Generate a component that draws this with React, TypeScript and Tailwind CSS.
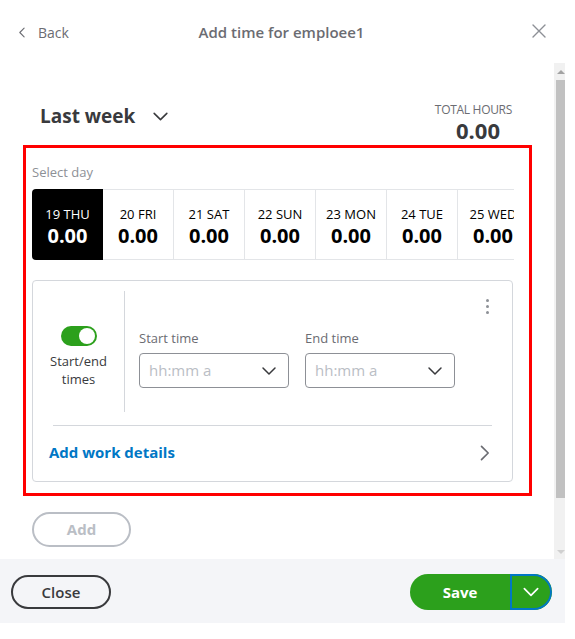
const days = [
  { label: "19 THU", value: "0.00" },
  { label: "20 FRI", value: "0.00" },
  { label: "21 SAT", value: "0.00" },
  { label: "22 SUN", value: "0.00" },
  { label: "23 MON", value: "0.00" },
  { label: "24 TUE", value: "0.00" },
  { label: "25 WED", value: "0.00" },
]

function Chevron({ className = "", dir = "down" }: { className?: string; dir?: "down" | "left" | "right" }) {
  const d = dir === "down" ? "M4 8l8 8 8-8" : dir === "left" ? "M15 4l-8 8 8 8" : "M9 4l8 8-8 8"
  return (
    <svg viewBox="0 0 24 24" className={className} fill="none" stroke="currentColor" strokeWidth="2" strokeLinecap="round" strokeLinejoin="round">
      <path d={d} />
    </svg>
  )
}

function TimeSelect({ label }: { label: string }) {
  return (
    <div className="w-[150px]">
      <div className="text-[13px] text-[#6b6c72] leading-4 mb-[7px]">{label}</div>
      <div className="h-[35px] rounded-[4px] border border-[#8d9096] flex items-center justify-between pl-[9px] pr-[10px]">
        <span className="text-[15px] text-[#babec5]">hh:mm a</span>
        <Chevron className="w-[18px] h-[18px] text-[#393a3d]" />
      </div>
    </div>
  )
}

export default function App() {
  return (
    <div className="w-[575px] h-[639px] bg-white text-[#393a3d] overflow-hidden" style={{ fontFamily: '"Open Sans", "Noto Sans", sans-serif' }}>
      <div className="w-[565px] flex flex-col">
        {/* header */}
        <div className="h-[63px] flex items-center pl-[16px] pr-[18px] pt-[2px]">
          <div className="flex items-center gap-[9px] text-[#6b6c72] w-[120px]">
            <Chevron dir="left" className="w-[13px] h-[13px]" />
            <span className="text-[14px]">Back</span>
          </div>
          <div className="flex-1 text-center text-[15px] font-semibold text-[#6b6c72]">Add time for emploee1</div>
          <div className="w-[120px] flex justify-end -mt-[4px]">
            <svg viewBox="0 0 16 16" className="w-[16px] h-[16px] text-[#8d9096]" fill="none" stroke="currentColor" strokeWidth="1.4" strokeLinecap="round">
              <path d="M2 2l12 12M14 2L2 14" />
            </svg>
          </div>
        </div>

        <div className="flex h-[496px]">
          {/* scroll content */}
          <div className="flex-1 flex flex-col">
            <div className="flex items-start justify-between pl-[40px] pr-[42px] pt-[39px] h-[82px]">
              <div className="flex items-center gap-[16px]">
                <span className="text-[19px] font-bold text-[#393a3d]">Last week</span>
                <Chevron className="w-[19px] h-[19px] text-[#393a3d]" />
              </div>
              <div className="flex flex-col items-end">
                <span className="text-[12px] text-[#6b6c72] leading-[16px] tracking-[-0.3px]">TOTAL HOURS</span>
                <span className="text-[22px] font-bold leading-[24px] mr-[12px]">0.00</span>
              </div>
            </div>

            <div className="ml-[23px] w-[509px] h-[351px] border-[3px] border-[#ff0000] pl-[6px] pr-[16px] pt-[16px]">
              <div className="text-[13px] text-[#8d9096] leading-4">Select day</div>
              <div className="mt-[9px] w-[482px] overflow-hidden">
                <div className="flex w-[520px] h-[71px]">
                  {days.map((d, i) => (
                    <div
                      key={d.label}
                      className={
                        i === 0
                          ? "w-[71px] shrink-0 bg-black text-white rounded-l-[4px] flex flex-col items-center justify-center"
                          : "w-[71px] shrink-0 border-y border-r border-[#e3e5e8] text-black flex flex-col items-center justify-center"
                      }
                    >
                      <span className="text-[13px] leading-4 mt-[4px]">{d.label}</span>
                      <span className="text-[20px] font-bold leading-6 mt-[2px]">{d.value}</span>
                    </div>
                  ))}
                </div>
              </div>

              <div className="mt-[20px] w-[481px] h-[202px] border border-[#d4d7dc] rounded-[4px] flex flex-col">
                <div className="flex h-[144px] relative">
                  <div className="w-[91px] flex flex-col items-center justify-center pt-[8px]">
                    <div className="w-[36px] h-[20px] rounded-full bg-[#2ca01c] flex items-center justify-end pr-[2px]">
                      <div className="w-[16px] h-[16px] rounded-full bg-white" />
                    </div>
                    <div className="text-[13px] text-[#393a3d] text-center leading-[18px] mt-[6px]">
                      Start/end
                      <br />
                      times
                    </div>
                  </div>
                  <div className="w-px bg-[#d4d7dc] mt-[10px] h-[121px]" />
                  <div className="flex gap-[16px] pl-[14px] pt-[49px]">
                    <TimeSelect label="Start time" />
                    <TimeSelect label="End time" />
                  </div>
                  <div className="absolute right-[23px] top-[18px] flex flex-col gap-[3px]">
                    <div className="w-[3px] h-[3px] rounded-full bg-[#8d9096]" />
                    <div className="w-[3px] h-[3px] rounded-full bg-[#8d9096]" />
                    <div className="w-[3px] h-[3px] rounded-full bg-[#8d9096]" />
                  </div>
                </div>
                <div className="mx-[20px] h-px bg-[#d4d7dc]" />
                <div className="flex-1 flex items-center justify-between pl-[16px] pr-[18px] pb-[2px]">
                  <span className="text-[15px] font-bold text-[#0077c5]">Add work details</span>
                  <Chevron dir="right" className="w-[20px] h-[20px] text-[#6b6c72]" />
                </div>
              </div>
            </div>

            <div className="pl-[32px] mt-[16px]">
              <button className="w-[99px] h-[35px] rounded-full border-2 border-[#babec5] text-[15px] font-bold text-[#babec5]">Add</button>
            </div>
          </div>

          {/* scrollbar */}
          <div className="w-[11px] bg-[#f1f1f1] flex flex-col items-end">
            <div className="h-[17px] w-[9px] flex items-center justify-center">
              <div className="w-0 h-0 border-x-[4px] border-x-transparent border-b-[4px] border-b-[#a3a3a3]" />
            </div>
            <div className="w-[9px] h-[418px] bg-[#c1c1c1]" />
            <div className="flex-1" />
            <div className="h-[14px] w-[9px] flex items-center justify-center">
              <div className="w-0 h-0 border-x-[4px] border-x-transparent border-t-[4px] border-t-[#d0d0d0]" />
            </div>
          </div>
        </div>

        {/* footer */}
        <div className="h-[64px] bg-[#f4f5f8] flex items-center justify-between pl-[11px] pr-[13px] pt-[2px]">
          <button className="w-[100px] h-[34px] rounded-full border-2 border-[#393a3d] text-[15px] font-semibold text-[#393a3d]">Close</button>
          <div className="flex h-[36px] rounded-full bg-[#2ca01c] text-white overflow-hidden">
            <div className="w-[100px] flex items-center justify-center text-[15px] font-bold">Save</div>
            <div className="w-[42px] border-2 border-[#0077c5] rounded-r-full flex items-center justify-center">
              <Chevron className="w-[20px] h-[20px]" />
            </div>
          </div>
        </div>
      </div>
    </div>
  )
}
